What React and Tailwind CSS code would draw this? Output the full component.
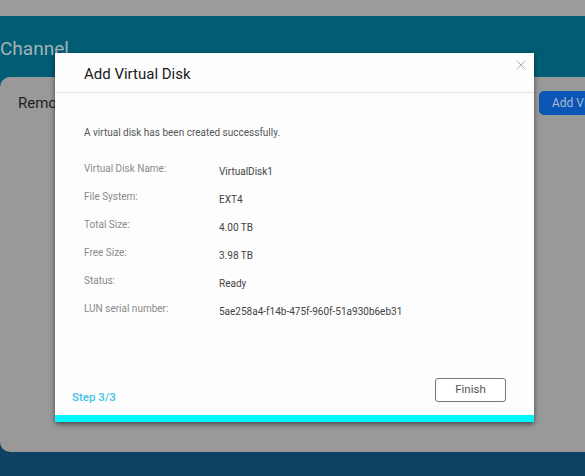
import { X } from 'lucide-react'

const rows = [
  ['Virtual Disk Name:', 'VirtualDisk1'],
  ['File System:', 'EXT4'],
  ['Total Size:', '4.00 TB'],
  ['Free Size:', '3.98 TB'],
  ['Status:', 'Ready'],
  ['LUN serial number:', '5ae258a4-f14b-475f-960f-51a930b6eb31'],
]

export default function App() {
  return (
    <div className="relative h-[476px] w-[585px] overflow-hidden flex flex-col font-['Roboto','Liberation_Sans',sans-serif]">
      <div className="h-4 shrink-0 bg-[#9b9b9b]" />
      <div className="flex-1 flex flex-col bg-[linear-gradient(to_bottom,#005d73_0px,#005d73_180px,#0d4263_181px)]">
        <div className="h-[61px] shrink-0 pt-[22px] text-[19px] leading-[22px] text-[#a3b3b8]">Channel</div>
        <div className="h-[375px] w-[640px] shrink-0 rounded-[10px] bg-[#999999]">
          <div className="flex items-center justify-between pl-[18px] pr-0 pt-[14px]">
            <span className="text-[15px] leading-[24px] text-[#1e1e1e]">Remote Disk</span>
            <span className="mr-[-1px] w-[102px] h-[24px] rounded-[5px] bg-[#0b55b4] pl-[13px] text-[12px] leading-[24px] text-[#a9b9d2]">Add Virtual Disk</span>
          </div>
          <div className="pl-[510px] pt-[176px] text-[12px] leading-[16px] text-[#1e1e1e]">NAS</div>
        </div>
      </div>

      <div className="absolute left-[55px] top-[53px] w-[479px] h-[369px] bg-[#fdfdfd] shadow-[0_2px_5px_rgba(0,0,0,0.55)] flex flex-col">
        <div className="relative h-[40px] shrink-0 border-b border-[#e2e2e2] pl-[29px] pt-[3px] flex items-center">
          <span className="text-[15px] text-[#1a1a1a]">Add Virtual Disk</span>
          <X className="absolute right-[5px] top-[4px] w-[16px] h-[16px] text-[#a3a3a3]" strokeWidth={1.3} />
        </div>
        <div className="flex-1 pl-[29px] pt-[33px]">
          <p className="text-[10px] leading-[14px] text-[#555]">A virtual disk has been created successfully.</p>
          <div className="mt-[16px]">
            {rows.map(([label, value]) => (
              <div key={label} className="flex h-[28px] items-start text-[10px] leading-[14px]">
                <span className="w-[135px] pt-[6px] text-[#8a8a8a]">{label}</span>
                <span className="pt-[9px] text-[#444]">{value}</span>
              </div>
            ))}
          </div>
        </div>
        <div className="flex shrink-0 items-start justify-between pl-[17px] pr-[28px] pb-[10px]">
          <span className="mt-[11px] text-[11.5px] leading-[16px] font-medium text-[#3fc4e8]">Step 3/3</span>
          <button className="h-[24px] w-[71px] rounded-[3px] border border-[#777] bg-white text-[11.5px] text-[#555]">Finish</button>
        </div>
        <div className="h-[7px] shrink-0 bg-[#00f7ff]" />
      </div>
    </div>
  )
}
